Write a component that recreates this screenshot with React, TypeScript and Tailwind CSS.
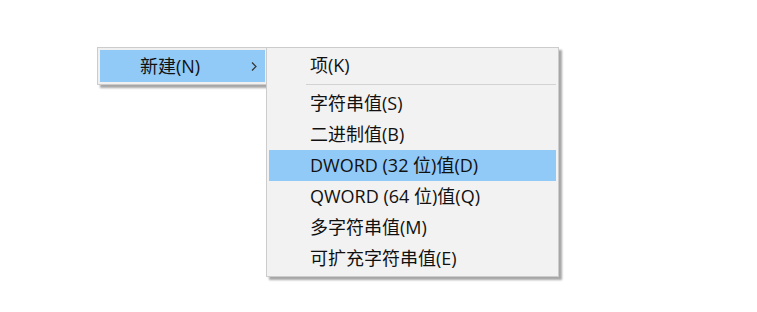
const items = [
  { label: '字符串值(S)' },
  { label: '二进制值(B)' },
  { label: 'DWORD (32 位)值(D)', active: true },
  { label: 'QWORD (64 位)值(Q)' },
  { label: '多字符串值(M)' },
  { label: '可扩充字符串值(E)' },
];

export default function App() {
  return (
    <div className="w-[757px] h-[312px] bg-white pt-[47px] pl-[97px] font-['Open_Sans','Noto_Sans_CJK_SC',sans-serif] text-[18px] text-[#111]">
      <div className="relative w-[171px]">
        {/* parent menu */}
        <div className="border border-[#cccccc] bg-[#f0f0f0] p-[2px] shadow-[3px_3px_2px_rgba(0,0,0,0.35)]">
          <div className="h-[32px] bg-[#91c9f7] flex items-center pl-[40px] justify-between">
            <span>新建(N)</span>
            <svg width="6" height="9" viewBox="0 0 6 9" className="mr-[8px]">
              <path d="M1 0.5 L5 4.5 L1 8.5" fill="none" stroke="#333" strokeWidth="1.2" />
            </svg>
          </div>
        </div>

        {/* submenu */}
        <div className="absolute left-[169px] top-0 w-[293px] border border-[#cccccc] bg-[#f2f2f2] p-[2px] shadow-[3px_3px_2px_rgba(0,0,0,0.35)]">
          <div className="h-[31px] flex items-center pl-[41px]">项(K)</div>
          <div className="h-[7px] flex items-center pl-[37px]">
            <div className="h-px w-full bg-[#d2d2d2]" />
          </div>
          {items.map(item => (
            <div
              key={item.label}
              className={`h-[31px] flex items-center pl-[41px] ${item.active ? 'bg-[#91c9f7]' : ''}`}
            >
              {item.label}
            </div>
          ))}
        </div>
      </div>
    </div>
  );
}
